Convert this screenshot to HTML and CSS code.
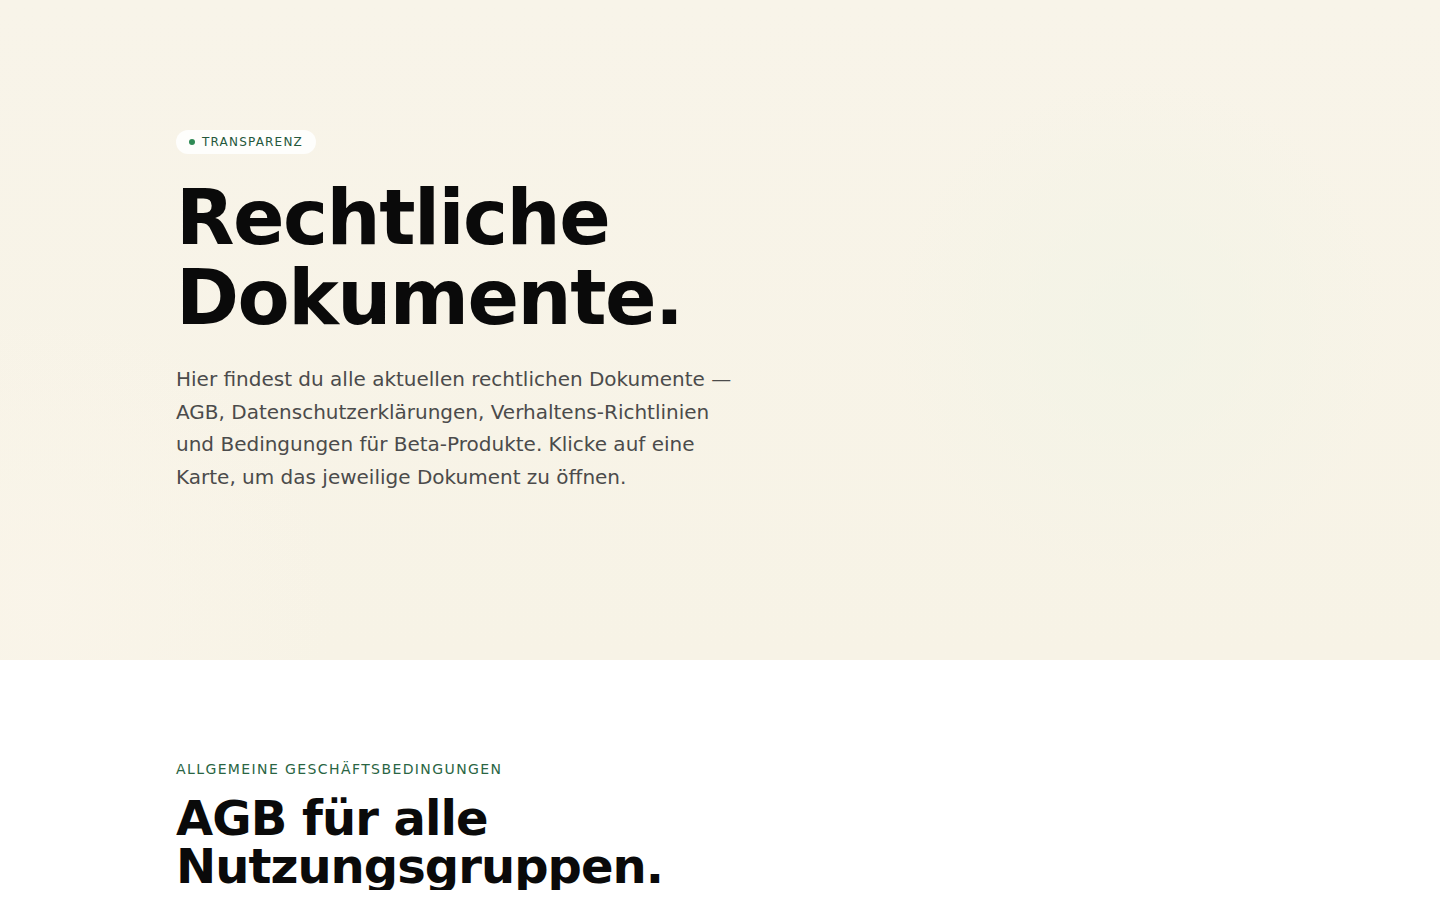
FILE: index.html
```html
<!DOCTYPE html>
<html lang="de">
<head>
<meta charset="utf-8">
<title>Rechtliche Dokumente</title>
<link rel="stylesheet" href="styles.css">
</head>
<body>
<header class="hero">
  <div class="container">
    <span class="badge"><span class="badge-dot"></span>TRANSPARENZ</span>
    <h1 class="hero-title">Rechtliche<br>Dokumente.</h1>
    <p class="hero-text">Hier findest du alle aktuellen rechtlichen Dokumente — AGB, Datenschutzerklärungen, Verhaltens-Richtlinien und Bedingungen für Beta-Produkte. Klicke auf eine Karte, um das jeweilige Dokument zu öffnen.</p>
  </div>
</header>
<main>
  <section class="section">
    <div class="container">
      <div class="eyebrow">Allgemeine Geschäftsbedingungen</div>
      <h2 class="section-title">AGB für alle<br>Nutzungsgruppen.</h2>
    </div>
  </section>
</main>
</body>
</html>
```

FILE: styles.css
```css
* { box-sizing: border-box; }
html, body { margin: 0; padding: 0; }
body {
  font-family: "DejaVu Sans", "Noto Sans", sans-serif;
  background: #ffffff;
  color: #0a0a0a;
}
.container {
  width: 1088px;
  margin: 0 auto;
}
.hero {
  height: 660px;
  padding-top: 130px;
  background:
    radial-gradient(circle at 1140px 330px, rgba(241, 243, 230, 0.7) 0, rgba(243, 243, 230, 0.35) 170px, rgba(247, 243, 232, 0) 250px),
    radial-gradient(circle at 40px 600px, rgba(250, 245, 234, 0.8) 0, rgba(248, 244, 232, 0) 300px),
    linear-gradient(180deg, #f8f4e9 0%, #f7f3e6 100%);
}
.badge {
  display: inline-flex;
  align-items: center;
  gap: 7px;
  height: 24px;
  padding: 0 13px 0 13px;
  border-radius: 12px;
  background: rgba(255, 255, 255, 0.85);
  font-size: 12px;
  letter-spacing: 0.1em;
  color: #24573b;
}
.badge-dot {
  width: 6px;
  height: 6px;
  border-radius: 50%;
  background: #2f8a55;
}
.hero-title {
  margin: 24px 0 0 0;
  font-size: 76px;
  line-height: 80px;
  font-weight: 700;
  letter-spacing: -0.02em;
  color: #0a0a0a;
}
.hero-text {
  margin: 25px 0 0 0;
  width: 565px;
  font-size: 20px;
  line-height: 32.5px;
  color: #4b4b4b;
}
.section {
  padding-top: 100px;
}
.eyebrow {
  font-size: 14px;
  letter-spacing: 0.1em;
  text-transform: uppercase;
  color: #2a6543;
  line-height: 18px;
}
.section-title {
  margin: 16px 0 0 0;
  font-size: 48px;
  line-height: 48px;
  font-weight: 700;
  letter-spacing: -0.02em;
  color: #0a0a0a;
}
```
